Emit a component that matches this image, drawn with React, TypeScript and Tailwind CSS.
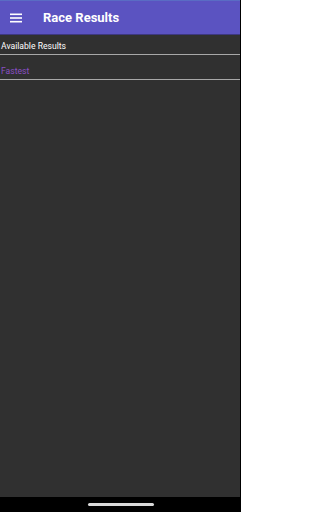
export default function App() {
  return (
    <div className="flex h-[512px] w-[241px] flex-col bg-black font-['Roboto',sans-serif]">
      <div className="flex h-[497px] w-[240px] flex-col bg-[#303030]">
        <header className="flex h-[35px] shrink-0 items-center border-t border-t-[#5a6cc4] border-b border-b-[#3d3880] bg-[#5b53c1]">
          <svg className="ml-[10px]" width="12" height="10" viewBox="0 0 12 10" fill="#fff">
            <rect x="0" y="0.5" width="12" height="1.6" />
            <rect x="0" y="4.2" width="12" height="1.6" />
            <rect x="0" y="7.9" width="12" height="1.6" />
          </svg>
          <h1 className="ml-[21px] text-[13px] leading-none font-bold text-white">Race Results</h1>
        </header>
        <div className="pt-[6px]">
          <div className="border-b border-[#a8a8a8] pb-[2px] pl-[1px] text-[8.6px] leading-[11px] text-white">
            Available Results
          </div>
          <div className="mt-[11px] border-b border-[#a8a8a8] pb-[2px] pl-[1px] text-[8.6px] leading-[11px] text-[#8a4fc4]">
            Fastest
          </div>
        </div>
      </div>
      <div className="flex flex-1 items-center justify-center">
        <div className="h-[3px] w-[66px] rounded-full bg-[#dadada]" />
      </div>
    </div>
  );
}
